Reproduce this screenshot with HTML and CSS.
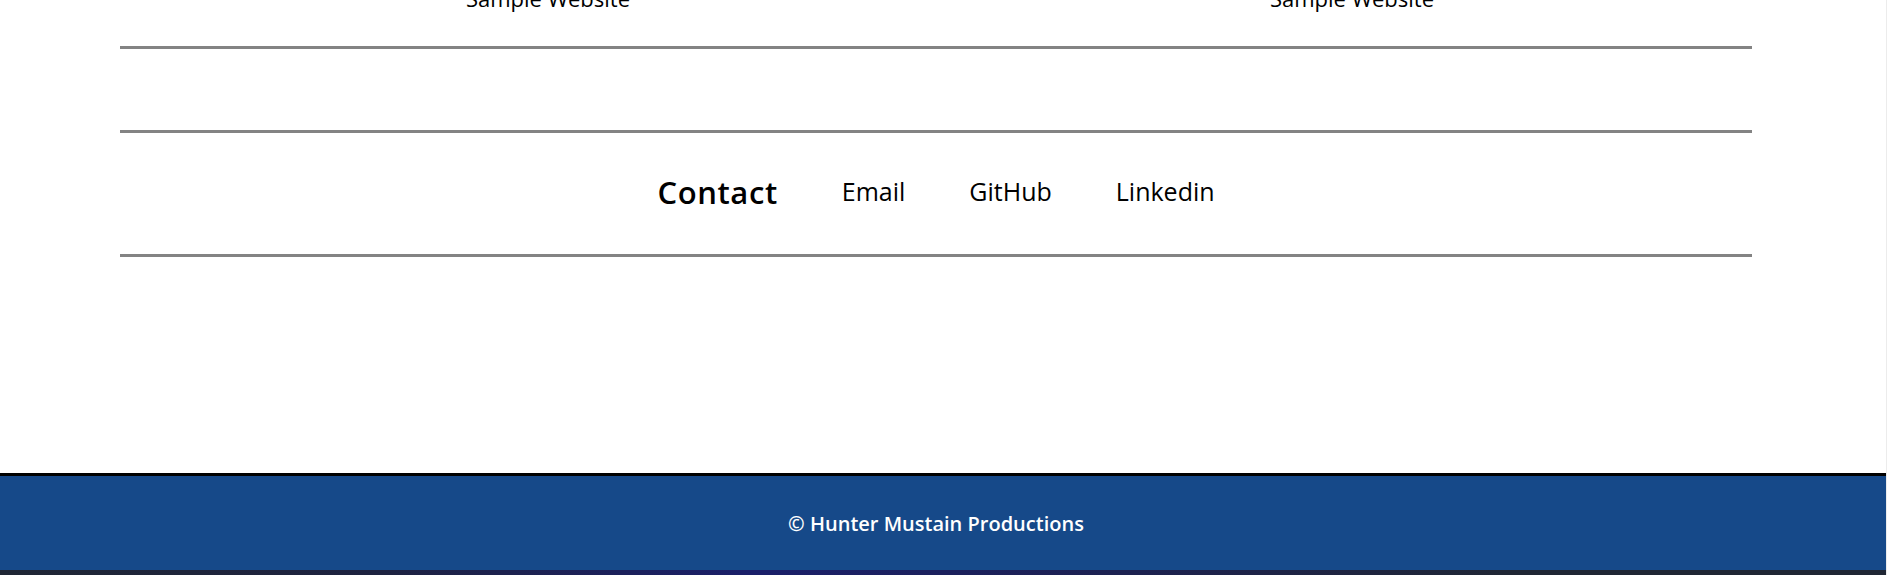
FILE: index.html
```html
<!DOCTYPE html>
<html lang="en">
<head>
<meta charset="utf-8">
<title>Hunter Mustain</title>
<link rel="stylesheet" href="styles.css">
</head>
<body>
<div class="page">
  <section class="projects">
    <div class="project"><p class="caption">Sample Website</p></div>
    <div class="project"><p class="caption">Sample Website</p></div>
  </section>
  <div class="rule rule-first"></div>
  <div class="blank"></div>
  <div class="rule"></div>
  <section class="contact">
    <h2 class="contact-title">Contact</h2>
    <a class="contact-link" href="#">Email</a>
    <a class="contact-link" href="#">GitHub</a>
    <a class="contact-link" href="#">Linkedin</a>
  </section>
  <div class="rule"></div>
  <div class="spacer"></div>
  <footer class="footer">
    <p class="copyright">© Hunter Mustain Productions</p>
  </footer>
  <div class="strip"></div>
</div>
</body>
</html>
```
FILE: styles.css
```css
html {
  background: #ececec;
}
body {
  margin: 0 1px 0 0;
  background: #ffffff;
  font-family: "Open Sans", "Noto Sans", sans-serif;
  color: #000;
}
.page {
  display: flex;
  flex-direction: column;
}
.projects {
  display: grid;
  grid-template-columns: 804px 804px;
  margin: -17px 0 0 146px;
}
.project {
  text-align: center;
}
.caption {
  margin: 0;
  font-size: 22px;
  line-height: 30px;
  font-weight: 500;
}
.rule {
  margin-left: 120px;
  width: 1632px;
  border-top: 3px solid #838383;
}
.rule-first {
  margin-top: 33px;
}
.blank {
  height: 81px;
}
.contact {
  height: 115px;
  padding-bottom: 6px;
  display: flex;
  justify-content: center;
  align-items: center;
  gap: 64px;
  padding-right: 14px;
}
.contact-title {
  margin: 3px 0 0 0;
  font-size: 31px;
  font-weight: 600;
  letter-spacing: 0.6px;
}
.contact-link {
  color: #000;
  text-decoration: none;
  font-size: 25px;
  font-weight: 400;
}
.spacer {
  height: 216px;
}
.footer {
  border-top: 3px solid #000;
  background: #164989;
  height: 94px;
  display: flex;
  align-items: center;
  justify-content: center;
  padding-right: 14px;
}
.copyright {
  margin: 0;
  color: #fff;
  font-size: 20px;
  font-weight: 600;
}
.strip {
  height: 20px;
  background: linear-gradient(90deg, #1f2634 0%, #1d2240 20%, #1a1f6a 40%, #1c2150 60%, #1f2634 80%, #1f2634 100%);
}
```
